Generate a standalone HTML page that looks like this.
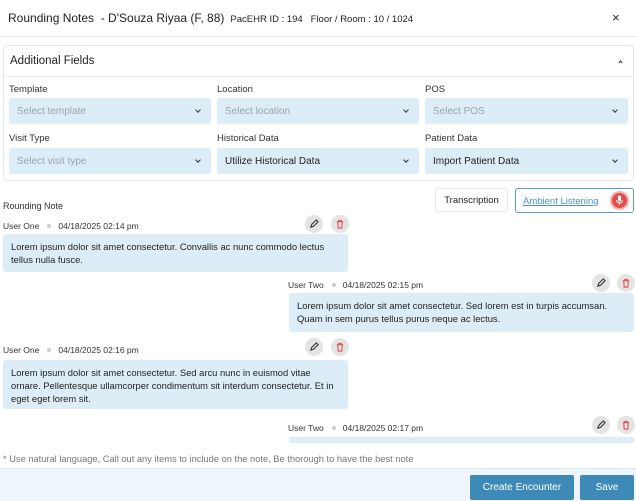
<!DOCTYPE html>
<html><head><meta charset="utf-8"><style>
*{box-sizing:border-box;margin:0;padding:0}
body{width:636px;height:501px;overflow:hidden;background:#fff;font-family:"Liberation Sans",sans-serif;color:#222;position:relative}
.a{position:absolute}
.hdr{left:0;top:0;width:636px;height:37px;border-bottom:1px solid #dfe8ef}
.card{left:3px;top:45px;width:631px;height:136px;border:1px solid #dfe8ef;border-radius:4px}
.lbl{font-size:9.5px;color:#333}
.sel{height:26px;background:#dcedf7;border-radius:3px;font-size:10px;color:#9aa5ae;padding:0 8px;line-height:28px}
.sel.v{color:#222}
.sel:after{content:"";position:absolute;right:11px;top:10px;width:3px;height:3px;border-right:1.1px solid #333;border-bottom:1.1px solid #333;transform:rotate(45deg)}
.meta{font-size:8.5px;color:#333}
.meta .d{display:inline-block;width:4px;height:4px;border-radius:50%;background:#ccc;margin:0 7px 1px 8px}
.bub{background:#dcedf7;border-radius:3px;font-size:9.4px;line-height:13px;color:#222;padding:6px 8px}
.ic{width:18px;height:18px;border-radius:50%;background:#e4e4e4}
.ic svg{position:absolute;left:4px;top:4px}
.btn{height:25px;background:#3d8ab8;color:#fff;font-size:10px;text-align:center;line-height:25px;border-radius:2px}
</style></head><body>
<div class="a hdr">
 <div class="a" style="left:8px;top:11px;font-size:12px;white-space:nowrap;color:#222">Rounding Notes&nbsp; - D'Souza Riyaa (F, 88) <span style="font-size:9.5px">&nbsp;PacEHR ID : 194&nbsp;&nbsp; Floor / Room : 10 / 1024</span></div>
 <div class="a" style="left:612px;top:10px;font-size:13px">×</div>
</div>
<div class="a card">
 <div class="a" style="left:0;top:0;width:629px;height:31px;border-bottom:1px solid #e6eef4"></div>
 <div class="a" style="left:6px;top:9px;font-size:11.5px">Additional Fields</div>
 <div class="a" style="left:615px;top:15px;width:3px;height:3px;border-left:1.1px solid #333;border-top:1.1px solid #333;transform:rotate(45deg)"></div>
</div>
<div class="a lbl" style="left:9px;top:84px">Template</div>
<div class="a lbl" style="left:217px;top:84px">Location</div>
<div class="a lbl" style="left:425px;top:84px">POS</div>
<div class="a sel" style="left:9px;top:98px;width:202px">Select template</div>
<div class="a sel" style="left:217px;top:98px;width:202px">Select location</div>
<div class="a sel" style="left:425px;top:98px;width:203px">Select POS</div>
<div class="a lbl" style="left:9px;top:133px">Visit Type</div>
<div class="a lbl" style="left:217px;top:133px">Historical Data</div>
<div class="a lbl" style="left:425px;top:133px">Patient Data</div>
<div class="a sel" style="left:9px;top:148px;width:202px">Select visit type</div>
<div class="a sel v" style="left:217px;top:148px;width:202px">Utilize Historical Data</div>
<div class="a sel v" style="left:425px;top:148px;width:203px">Import Patient Data</div>

<div class="a" style="left:3px;top:201px;font-size:9px;color:#333">Rounding Note</div>
<div class="a" style="left:435px;top:188px;width:73px;height:24px;border:1px solid #dfe8ef;border-radius:3px;font-size:9.5px;text-align:center;line-height:24px">Transcription</div>
<div class="a" style="left:515px;top:188px;width:119px;height:25px;border:1px solid #5a9cc4;border-radius:3px">
 <div class="a" style="left:7px;top:7px;font-size:9.5px;color:#4a92c0;text-decoration:underline">Ambient Listening</div>
 <div class="a" style="left:94px;top:2px;width:19px;height:19px;border-radius:50%;background:#e54b4b;border:2px solid #f6b0b0"></div>
 <svg class="a" style="left:99px;top:6px" width="9" height="11" viewBox="0 0 9 11"><rect x="3" y="0.5" width="3" height="6" rx="1.5" fill="#fff"/><path d="M1.5 5a3 3 0 0 0 6 0M4.5 8v2" stroke="#fff" fill="none"/></svg>
</div>

<!-- msg1 -->
<div class="a meta" style="left:3px;top:221px">User One<span class="d"></span>04/18/2025 02:14 pm</div>
<div class="a ic" style="left:305px;top:215px"><svg width="10" height="10" viewBox="0 0 11 11"><path d="M2 9l1-3 5-5 2 2-5 5z" fill="none" stroke="#333" stroke-width="1.2"/></svg></div>
<div class="a ic" style="left:331px;top:215px"><svg width="10" height="10" viewBox="0 0 11 11"><path d="M2 3h7M4 3V1.5h3V3M3 3l.5 7h4L8 3" fill="none" stroke="#e05252" stroke-width="1.2"/></svg></div>
<div class="a bub" style="left:3px;top:234px;width:345px;height:38px">Lorem ipsum dolor sit amet consectetur. Convallis ac nunc commodo lectus tellus nulla fusce.</div>

<!-- msg2 -->
<div class="a meta" style="left:288px;top:280px">User Two<span class="d"></span>04/18/2025 02:15 pm</div>
<div class="a ic" style="left:592px;top:274px"><svg width="10" height="10" viewBox="0 0 11 11"><path d="M2 9l1-3 5-5 2 2-5 5z" fill="none" stroke="#333" stroke-width="1.2"/></svg></div>
<div class="a ic" style="left:617px;top:274px"><svg width="10" height="10" viewBox="0 0 11 11"><path d="M2 3h7M4 3V1.5h3V3M3 3l.5 7h4L8 3" fill="none" stroke="#e05252" stroke-width="1.2"/></svg></div>
<div class="a bub" style="left:289px;top:293px;width:345px;height:39px">Lorem ipsum dolor sit amet consectetur. Sed lorem est in turpis accumsan. Quam in sem purus tellus purus neque ac lectus.</div>

<!-- msg3 -->
<div class="a meta" style="left:3px;top:345px">User One<span class="d"></span>04/18/2025 02:16 pm</div>
<div class="a ic" style="left:305px;top:338px"><svg width="10" height="10" viewBox="0 0 11 11"><path d="M2 9l1-3 5-5 2 2-5 5z" fill="none" stroke="#333" stroke-width="1.2"/></svg></div>
<div class="a ic" style="left:331px;top:338px"><svg width="10" height="10" viewBox="0 0 11 11"><path d="M2 3h7M4 3V1.5h3V3M3 3l.5 7h4L8 3" fill="none" stroke="#e05252" stroke-width="1.2"/></svg></div>
<div class="a bub" style="left:3px;top:360px;width:345px;height:49px">Lorem ipsum dolor sit amet consectetur. Sed arcu nunc in euismod vitae ornare. Pellentesque ullamcorper condimentum sit interdum consectetur. Et in eget eget lorem sit.</div>

<!-- msg4 -->
<div class="a meta" style="left:288px;top:423px">User Two<span class="d"></span>04/18/2025 02:17 pm</div>
<div class="a ic" style="left:592px;top:416px"><svg width="10" height="10" viewBox="0 0 11 11"><path d="M2 9l1-3 5-5 2 2-5 5z" fill="none" stroke="#333" stroke-width="1.2"/></svg></div>
<div class="a ic" style="left:617px;top:416px"><svg width="10" height="10" viewBox="0 0 11 11"><path d="M2 3h7M4 3V1.5h3V3M3 3l.5 7h4L8 3" fill="none" stroke="#e05252" stroke-width="1.2"/></svg></div>
<div class="a" style="left:289px;top:437px;width:345px;height:6px;background:#dcedf7"></div>

<div class="a" style="left:3px;top:454px;font-size:9.3px;color:#777">* Use natural language, Call out any items to include on the note, Be thorough to have the best note</div>
<div class="a" style="left:0;top:468px;width:636px;height:33px;background:#eef6fb;border-top:1px solid #dfe8ef"></div>
<div class="a btn" style="left:470px;top:475px;width:104px">Create Encounter</div>
<div class="a btn" style="left:580px;top:475px;width:54px">Save</div>
</body></html>
